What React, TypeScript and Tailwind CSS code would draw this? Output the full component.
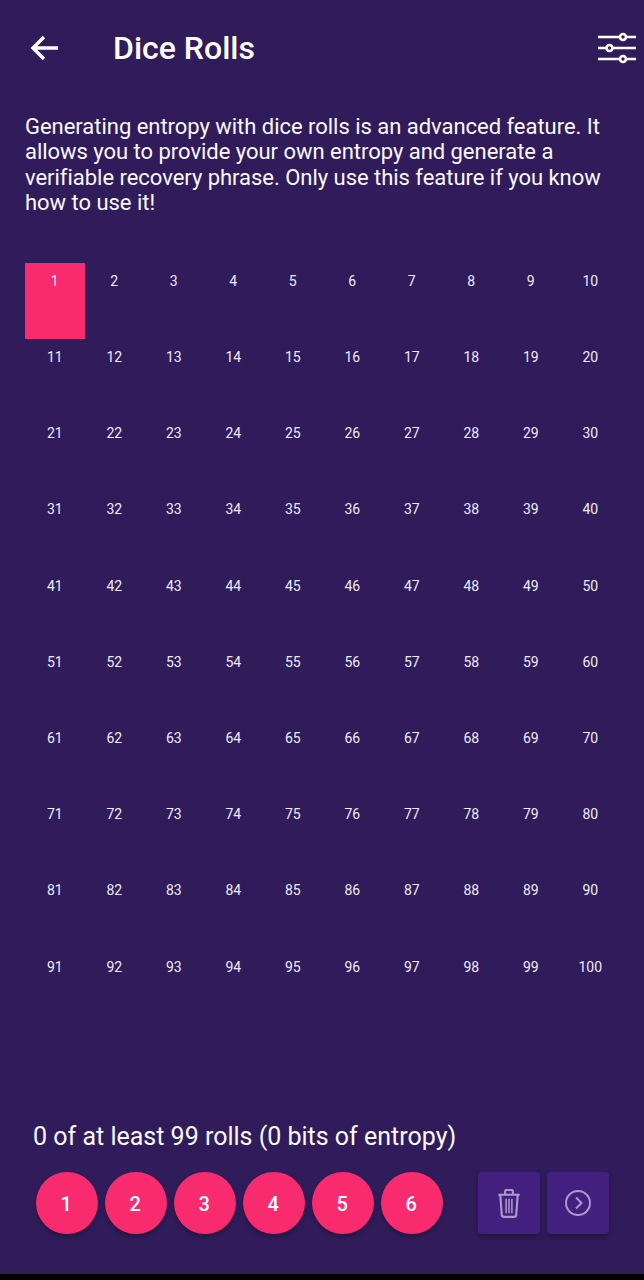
const cells = Array.from({ length: 100 }, (_, i) => i + 1);
const dice = [1, 2, 3, 4, 5, 6];

function BackIcon() {
  return (
    <svg width="28" height="26" viewBox="0 0 28 26" fill="none" stroke="#fdfbff" strokeWidth="3.4">
      <path d="M28 13H4M14 2L3 13L14 24" />
    </svg>
  );
}

function SlidersIcon() {
  return (
    <svg width="38" height="32" viewBox="0 0 38 32" fill="none" stroke="#fff" strokeWidth="2.6">
      <path d="M0 5H38M0 16H38M0 27H38" />
      <circle cx="25" cy="5" r="3" fill="#311c5b" />
      <circle cx="11.5" cy="16" r="3" fill="#311c5b" />
      <circle cx="25" cy="27" r="3" fill="#311c5b" />
    </svg>
  );
}

function TrashIcon() {
  return (
    <svg width="24" height="29" viewBox="0 0 24 30" fill="none" stroke="#ad9acd" strokeWidth="2.2">
      <path d="M1 6H23M8 6V2.5C8 1.6 8.6 1 9.5 1H14.5C15.4 1 16 1.6 16 2.5V6" />
      <path d="M3 6L4.5 26.5C4.6 28 5.5 28.8 7 28.8H17C18.5 28.8 19.4 28 19.5 26.5L21 6" />
      <path d="M9 10V25M12 10V25M15 10V25" strokeWidth="1.6" />
    </svg>
  );
}

function ForwardIcon() {
  return (
    <svg width="26" height="26" viewBox="0 0 26 26" fill="none" stroke="#ad9acd" strokeWidth="2">
      <circle cx="13" cy="13" r="12" />
      <path d="M11 7.5L16.5 13L11 18.5" />
    </svg>
  );
}

export default function App() {
  return (
    <div className="h-[1280px] w-[644px] bg-black font-['Roboto',sans-serif] text-white overflow-hidden">
      <div className="flex h-[1274px] flex-col bg-[#311c5b]">
        <header className="flex h-[96px] shrink-0 items-center pl-[30px] pr-[8px]">
          <BackIcon />
          <h1 className="ml-[55px] flex-1 text-[32px] font-medium leading-none">Dice Rolls</h1>
          <SlidersIcon />
        </header>

        <p className="mx-[25px] mt-[18px] text-[22px] leading-[25.3px] tracking-[-0.03px] text-[#fbf9fd]">
          Generating entropy with dice rolls is an advanced feature. It allows you to provide your own entropy and generate a verifiable recovery phrase. Only use this feature if you know how to use it!
        </p>

        <div className="mx-[25px] mt-[48px] grid w-[595px] grid-cols-10 auto-rows-[76.2px]">
          {cells.map((n) => (
            <div
              key={n}
              className={`pt-[8.7px] text-center text-[14px] leading-[18px] text-[#efeaf5] ${n === 1 ? "bg-[#f92b6f]" : ""}`}
            >
              {n}
            </div>
          ))}
        </div>

        <p className="ml-[33px] mt-[97px] text-[25px] leading-[30px] text-[#fbf9fd]">
          0 of at least 99 rolls (0 bits of entropy)
        </p>

        <div className="mt-[20px] flex items-center pl-[36px]">
          <div className="flex gap-[7px]">
            {dice.map((n) => (
              <button
                key={n}
                className="flex h-[62px] w-[62px] items-center justify-center rounded-full bg-[#f92b6f] pr-[1.5px] pt-[1px] text-[20px] font-medium shadow-[0_3px_5px_rgba(0,0,0,0.3)]"
              >
                {n}
              </button>
            ))}
          </div>
          <div className="ml-[35px] flex gap-[7px]">
            <button className="flex h-[62px] w-[62px] items-center justify-center rounded-[4px] bg-[#432080] shadow-[0_3px_5px_rgba(0,0,0,0.3)]">
              <TrashIcon />
            </button>
            <button className="flex h-[62px] w-[62px] items-center justify-center rounded-[4px] bg-[#432080] shadow-[0_3px_5px_rgba(0,0,0,0.3)]">
              <ForwardIcon />
            </button>
          </div>
        </div>
      </div>
    </div>
  );
}
